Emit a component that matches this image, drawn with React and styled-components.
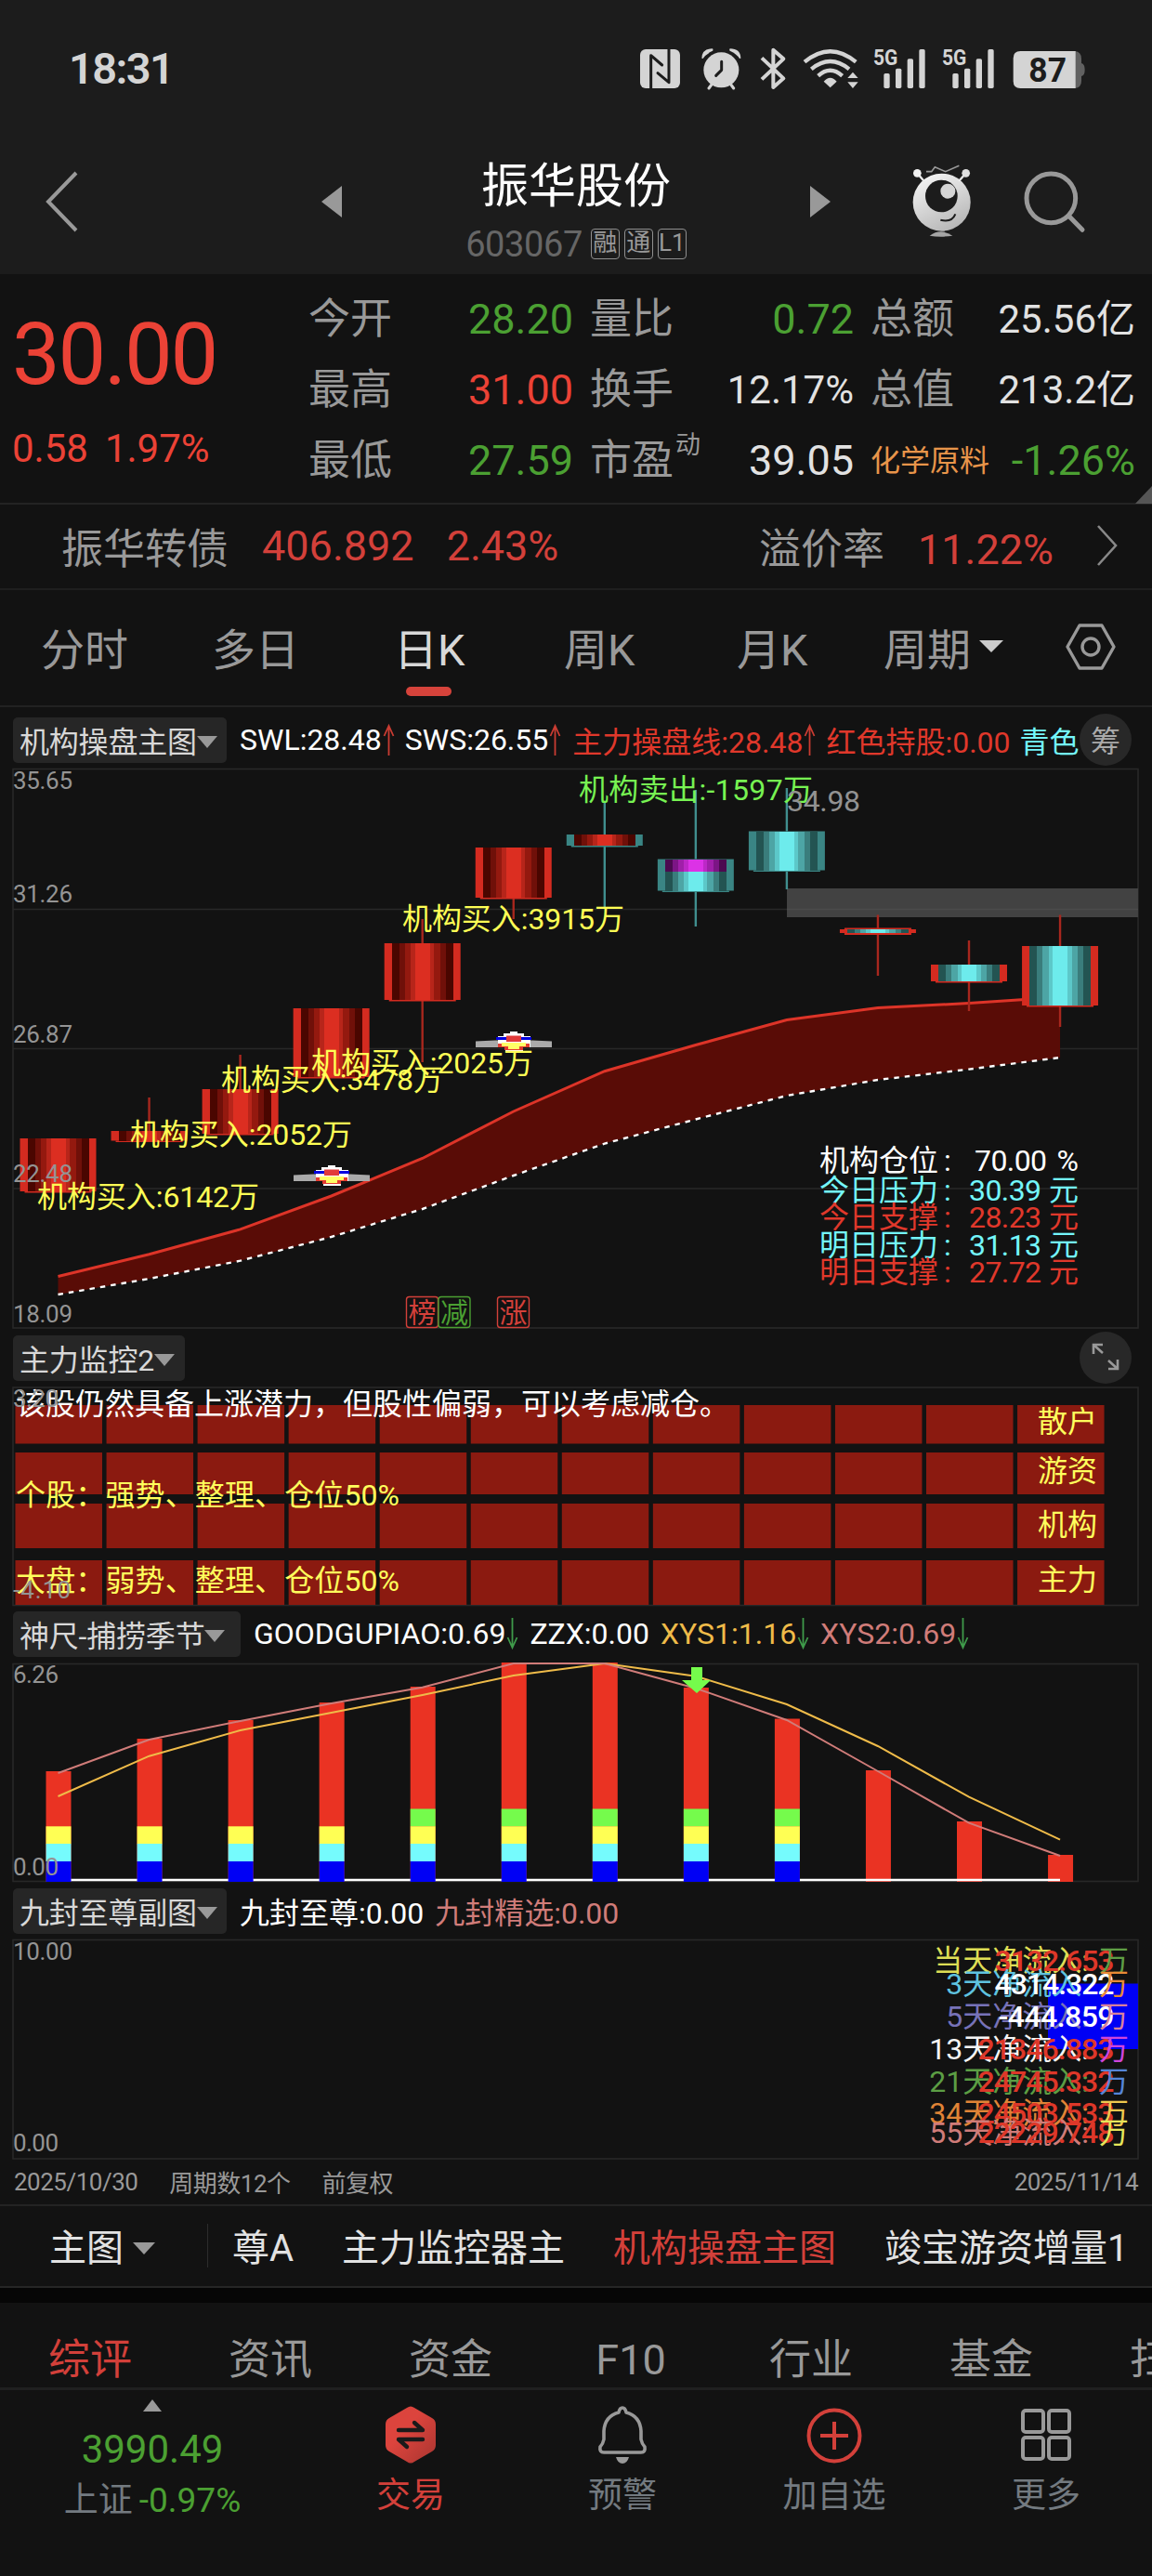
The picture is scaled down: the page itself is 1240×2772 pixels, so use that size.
import styled, { createGlobalStyle } from "styled-components";

const GlobalStyle = createGlobalStyle`
  body {
    margin: 0;
    background: #121212;
  }
  * {
    box-sizing: border-box;
  }
  svg {
    display: block;
    flex-shrink: 0;
  }
`;

const RED = "#eb4236";
const DIM_RED = "#d3403a";
const GREEN = "#4ba032";
const GRAY = "#999";
const LIGHT = "#e2e2e2";
const CYAN = "#74f6fa";
const YELLOW = "#ffff55";
const PINK = "#d07c79";
const GOLD = "#efbb49";

const Page = styled.div`
  width: 1240px;
  height: 2772px;
  overflow: hidden;
  background: #121212;
  color: ${LIGHT};
  font-family: Roboto, "Noto Sans CJK SC", sans-serif;
  font-weight: 400;
  white-space: nowrap;
`;

/* ---------- status bar ---------- */
const StatusBar = styled.div`
  height: 148px;
  padding: 40px 60px 0 74px;
  display: flex;
  justify-content: space-between;
  background: #1c1c1c;
  color: #d4d4d4;
`;
const Clock = styled.span`
  font-size: 47px;
  font-weight: 600;
  line-height: 68px;
  letter-spacing: -1.6px;
`;
const StatusIcons = styled.div`
  display: flex;
  height: 70px;
`;

/* ---------- header ---------- */
const Header = styled.header`
  height: 147px;
  display: flex;
  align-items: flex-start;
  background: #1c1c1c;
`;
const HeaderIcon = styled.div`
  margin: ${({ $top }) => $top}px 0 0 ${({ $left }) => $left}px;
`;
const HeaderCenter = styled.div`
  width: 504px;
  padding-top: 18px;
  display: flex;
  flex-direction: column;
  align-items: center;
`;
const StockName = styled.h1`
  margin: 0;
  font-size: 51px;
  font-weight: 400;
  line-height: 70px;
  color: #fff;
`;
const StockCode = styled.div`
  display: flex;
  align-items: center;
  gap: 5px;
  height: 33px;
  margin-top: 10px;
  color: #666;
  font-size: 38px;
  letter-spacing: -0.4px;
`;
const CodeBadge = styled.span`
  width: 31px;
  height: 33px;
  border: 1.5px solid #8f8f8f;
  border-radius: 4px;
  color: ${GRAY};
  font-size: 26px;
  line-height: 29px;
  letter-spacing: 0;
  display: flex;
  justify-content: center;
  &:first-of-type {
    margin-left: 4px;
  }
`;

/* ---------- quote ---------- */
const Quote = styled.section`
  position: relative;
  height: 248px;
  display: flex;
  border-bottom: 2px solid #232323;
`;
const PriceBox = styled.div`
  width: 332px;
  padding: 33px 0 0 13px;
  color: ${RED};
`;
const Price = styled.div`
  font-size: 92px;
  font-weight: 450;
  line-height: 108px;
  letter-spacing: -2.2px;
`;
const Change = styled.div`
  margin-top: 21px;
  display: flex;
  gap: 18px;
  font-size: 42px;
  line-height: 52px;
`;
const QuoteGrid = styled.div`
  display: grid;
  grid-template-columns: 285px 284px 285px;
  column-gap: 18px;
  grid-auto-rows: 76px;
  padding-top: 11px;
`;
const QuoteCell = styled.div`
  display: flex;
  align-items: center;
  justify-content: space-between;
  line-height: 76px;
`;
const QuoteLabel = styled.span`
  font-size: ${({ $small }) => ($small ? 32 : 45)}px;
  color: ${({ $small }) => ($small ? "#e8954a" : GRAY)};
  sup {
    font-size: 27px;
    line-height: 1;
    vertical-align: 23px;
    margin-left: 2px;
  }
`;
const QuoteValue = styled.span`
  font-size: ${({ $size }) => $size || 45}px;
  color: ${({ $color }) => $color || LIGHT};
`;
const Corner = styled.i`
  position: absolute;
  right: 0;
  bottom: -1px;
  border-left: 18px solid transparent;
  border-bottom: 19px solid #555;
`;

/* ---------- bond row ---------- */
const BondRow = styled.section`
  height: 92px;
  padding: 0 36px 2px 66px;
  display: flex;
  align-items: center;
  border-bottom: 2px solid #1e1e1e;
  font-size: 45px;
  color: ${GRAY};
`;
const BondValue = styled.span`
  color: ${DIM_RED};
  margin-left: ${({ $left }) => $left}px;
`;
const BondRate = styled.div`
  margin-left: auto;
  margin-right: 46px;
`;

/* ---------- period tabs ---------- */
const PeriodTabs = styled.nav`
  height: 126px;
  padding-left: 44px;
  display: grid;
  grid-template-columns: 184px 196px 183px 186px 158px 196px auto;
  border-bottom: 2px solid #222;
`;
const PeriodTab = styled.div`
  display: flex;
  align-items: center;
  gap: 9px;
  width: max-content;
  padding-bottom: 3px;
  font-size: 47px;
  position: relative;
  color: ${({ $active }) => ($active ? "#d8d8d8" : GRAY)};
  &::after {
    content: "";
    display: ${({ $active }) => ($active ? "block" : "none")};
    position: absolute;
    left: 13px;
    bottom: 10px;
    width: 49px;
    height: 10px;
    border-radius: 5px;
    background: #d6433b;
  }
`;
const Caret = styled.i`
  border: ${({ $size }) => $size || 11}px solid transparent;
  border-top: 13px solid ${({ $color }) => $color || GRAY};
  border-bottom: 0;
`;

/* ---------- chart legends ---------- */
const Legend = styled.div`
  height: ${({ $height }) => $height || 59}px;
  padding: ${({ $top }) => $top || 0}px 22px 0 14px;
  display: flex;
  align-items: center;
  font-size: 32px;
  font-weight: 400;
  position: relative;
`;
const IndicatorTag = styled.div`
  width: ${({ $width }) => $width}px;
  height: 49px;
  margin-right: 14px;
  padding: 0 0 2px 7px;
  border-radius: 5px;
  background: #262626;
  color: #d8d8d8;
  letter-spacing: -0.2px;
  display: flex;
  align-items: center;
  i {
    margin-top: 5px;
  }
`;
const LegendItem = styled.span`
  display: flex;
  align-items: center;
  padding-bottom: 1px;
  color: ${({ $color }) => $color || "#fff"};
  margin-left: ${({ $gap }) => $gap || 0}px;
  svg {
    margin-left: 1px;
  }
`;
const RoundButton = styled.div`
  position: absolute;
  right: 22px;
  bottom: 1px;
  width: 56px;
  height: 56px;
  padding-bottom: 2px;
  border-radius: 50%;
  background: #282828;
  color: #aaa;
  display: flex;
  align-items: center;
  justify-content: center;
`;
const DateRow = styled.div`
  height: 49px;
  padding: 0 15px 2px;
  display: flex;
  align-items: center;
  gap: 34px;
  font-size: 26px;
  letter-spacing: -0.5px;
  color: ${GRAY};
  border-bottom: 2px solid #232323;
  span:last-child {
    margin-left: auto;
  }
`;

/* ---------- bottom ---------- */
const IndicatorBar = styled.div`
  height: 88px;
  padding: 0 0 2px 53px;
  display: flex;
  align-items: center;
  font-size: 40px;
  border-bottom: 2px solid #262626;
`;
const MainPick = styled.div`
  width: 171px;
  height: 47px;
  margin-right: 26px;
  flex-shrink: 0;
  border-right: 1px solid #2c2c2c;
  display: flex;
  align-items: center;
  gap: 10px;
  i {
    margin-top: 6px;
  }
`;
const IndicatorName = styled.span`
  margin-right: 52px;
  flex-shrink: 0;
  color: ${({ $active }) => ($active ? DIM_RED : LIGHT)};
`;
const Divider = styled.div`
  height: 16px;
  background: #060606;
`;
const InfoTabs = styled.nav`
  height: 94px;
  padding-top: 31px;
  display: flex;
  border-bottom: 3px solid #1f1f1f;
`;
const InfoTab = styled.div`
  flex: 0 0 194px;
  text-align: center;
  font-size: 45px;
  line-height: 62px;
  color: ${({ $active }) => ($active ? DIM_RED : GRAY)};
`;
const BottomNav = styled.footer`
  display: flex;
  height: 200px;
`;
const IndexBox = styled.div`
  width: 329px;
  padding-top: 10px;
  display: flex;
  flex-direction: column;
  align-items: center;
  color: ${GREEN};
`;
const UpCaret = styled.i`
  border: 10px solid transparent;
  border-bottom: 13px solid ${GRAY};
  border-top: 0;
`;
const IndexPoint = styled.div`
  margin-top: 13px;
  font-size: 42px;
  line-height: 56px;
`;
const IndexChange = styled.div`
  margin-top: 2px;
  font-size: 37px;
  line-height: 50px;
  display: flex;
  gap: 7px;
  span:first-child {
    color: #737a80;
  }
`;
const NavItem = styled.div`
  width: 228px;
  flex-shrink: 0;
  padding-top: 16px;
  display: flex;
  flex-direction: column;
  align-items: center;
  gap: 7px;
  font-size: 37px;
  line-height: 54px;
  color: ${({ $active }) => ($active ? DIM_RED : "#737a80")};
`;

/* ---------- data ---------- */
const quotes = [
  { label: "今开", value: "28.20", color: GREEN },
  { label: "量比", value: "0.72", color: GREEN },
  { label: "总额", value: "25.56亿", size: 42 },
  { label: "最高", value: "31.00", color: RED },
  { label: "换手", value: "12.17%", size: 42 },
  { label: "总值", value: "213.2亿", size: 42 },
  { label: "最低", value: "27.59", color: GREEN },
  { label: "市盈", sup: "动", value: "39.05" },
  { label: "化学原料", small: true, value: "-1.26%", color: GREEN },
];

const centerOf = (i) => 62.5 + 98.05 * i;

const RED_TONES = ["#4a0600", "#701009", "#94190f", "#b7251a", "#dc2e21"];
const TEAL_TONES = ["#235452", "#3a7d7c", "#4da5a5", "#5cc8c9", "#6debec"];
const MAGENTA_TONES = ["#4c0a50", "#7c1585", "#a01fa9", "#bd28c7", "#dc32e6"];
const EDGE_RED = "#d42b20";
const EDGE_TEAL = "#3a8584";

// top / bottom of the body, then high / low of the wick
const candles = [
  { top: 1225, bottom: 1283 },
  { top: 1217, bottom: 1228.5, high: 1181 },
  { top: 1172, bottom: 1221, high: 1135 },
  { top: 1085, bottom: 1160 },
  { top: 1015, bottom: 1077, high: 989, low: 1143 },
  { top: 912, bottom: 967, low: 989 },
  { top: 898, bottom: 911, high: 863, low: 977, edge: EDGE_TEAL },
  { top: 924.5, bottom: 959.5, high: 850, low: 997, edge: EDGE_TEAL, tones: TEAL_TONES, cap: 938 },
  { top: 894.5, bottom: 937.5, high: 848, low: 957, edge: EDGE_TEAL, tones: TEAL_TONES },
  { top: 999, bottom: 1005, high: 984.5, low: 1050, tones: TEAL_TONES, thin: true },
  { top: 1038, bottom: 1057, high: 1012, low: 1088, tones: TEAL_TONES },
  { top: 1018, bottom: 1083, high: 984.5, low: 1105, tones: TEAL_TONES },
];
const upperLine = [1373.5, 1349.8, 1322.9, 1287, 1246.5, 1196, 1152.7, 1124.5, 1097.5, 1084.5, 1079.6, 1073];
const lowerLine = [1393, 1376, 1356.7, 1331, 1301, 1265, 1230.6, 1204.5, 1179, 1162, 1150.6, 1138];

const flowLabels = [
  { x: 40, y: 1299, text: "机构买入:6142万" },
  { x: 140, y: 1231.5, text: "机构买入:2052万" },
  { x: 238, y: 1172.5, text: "机构买入:3478万" },
  { x: 335, y: 1155, text: "机构买入:2025万" },
  { x: 433, y: 1000, text: "机构买入:3915万" },
];
const hints = [
  { y: 1260, label: "机构仓位", value: "70.00", unit: "%", color: "#fff" },
  { y: 1292, label: "今日压力", value: "30.39", unit: "元", color: CYAN },
  { y: 1320.5, label: "今日支撑", value: "28.23", unit: "元", color: "#e0382b" },
  { y: 1351, label: "明日压力", value: "31.13", unit: "元", color: CYAN },
  { y: 1380, label: "明日支撑", value: "27.72", unit: "元", color: "#e0382b" },
];
const marks = [
  { x: 437.5, text: "榜", color: DIM_RED },
  { x: 472, text: "减", color: GREEN },
  { x: 535.5, text: "涨", color: DIM_RED },
];

const blockRows = [
  { y: 1512, h: 41.5, label: "散户", base: 1540.5 },
  { y: 1563, h: 45, label: "游资", base: 1593.5 },
  { y: 1618, h: 48, label: "机构", base: 1652 },
  { y: 1679, h: 48, label: "主力", base: 1711 },
];

const bars = [1906, 1871, 1851, 1832, 1815, 1789, 1789, 1816, 1849.5, 1905, 1960, 1996];
const xys2 = [1908, 1872, 1852, 1833, 1815.7, 1790, 1790, 1816.7, 1851, 1906, 1961.7, 1997];
const xys1 = [1933, 1889.7, 1862, 1843, 1824, 1803, 1790, 1803.7, 1834, 1879, 1933.7, 1979.7];

const netFlows = [
  { y: 2121, label: "当天净流入:", color: "#dede55", value: "3132.653", unit: "#5f9e45" },
  { y: 2146, label: "3天净流入:", color: "#5fc3e0", value: "4314.322", white: true, unit: "#e88a35" },
  { y: 2180.5, label: "5天净流入:", color: "#7772b8", value: "-444.859", white: true, unit: "#d9809a" },
  { y: 2215.5, label: "13天净流入:", color: "#f4f4f4", value: "21346.883", unit: "#cf45dd" },
  { y: 2250.7, label: "21天净流入:", color: "#5c9e44", value: "24745.332", unit: "#5585d8" },
  { y: 2285, label: "34天净流入:", color: "#e08436", value: "24503.533", unit: "#eec84f" },
  { y: 2306, label: "55天净流入:", color: PINK, value: "22229.748", unit: "#e6e65a" },
];

const toPoints = (ys) => ys.map((y, i) => `${centerOf(i)},${y}`).join(" ");

/* ---------- chart parts ---------- */
const ChartSvg = styled.svg`
  font-family: Roboto, "Noto Sans CJK SC", sans-serif;
  font-size: 32px;
`;
const AxisText = styled.text`
  font-size: 26px;
  fill: #949494;
`;

function Chart({ top, height, children }) {
  return (
    <ChartSvg width="1240" height={height} viewBox={`0 ${top} 1240 ${height}`}>
      {children}
    </ChartSvg>
  );
}

function Frame({ top, bottom }) {
  return (
    <rect x="14" y={top} width="1211" height={bottom - top} fill="none" stroke="#282828" strokeWidth="1.6" />
  );
}

function Stripes({ x, top, height, tones }) {
  const edges = [8, 16, 22, 28.5, 33];
  return (
    <g shapeRendering="crispEdges">
      {tones.map((tone, i) => (
        <rect key={tone} x={x + edges[i]} y={top} width={82 - edges[i] * 2} height={height} fill={tone} />
      ))}
    </g>
  );
}

function Candle({ index, top, bottom, high, low, edge = EDGE_RED, tones = RED_TONES, cap, thin }) {
  const cx = centerOf(index);
  const x = cx - 41;
  const wick = edge === EDGE_RED ? "#a8271e" : "#408f8f";
  return (
    <g>
      {low && <path d={`M${cx} ${bottom}V${low}`} stroke={wick} strokeWidth="2.4" />}
      {thin ? (
        <>
          <rect x={x} y={top + 1} width="82" height="4" fill={edge} />
          <rect x={x + 5} y={top - 0.5} width="72" height="7.5" fill={edge} />
          <Stripes x={x} top={top + 1} height={4} tones={tones} />
        </>
      ) : (
        <>
          <rect x={x} y={top} width="82" height={bottom - top - 1} fill={edge} />
          <rect x={x + 5} y={bottom - 1} width="72" height="1.5" fill={edge} />
          <Stripes x={x} top={top} height={bottom - top - 1} tones={tones} />
        </>
      )}
      {cap && <Stripes x={x} top={top} height={cap - top} tones={MAGENTA_TONES} />}
      {high && <path d={`M${cx} ${high}V${top}`} stroke={wick} strokeWidth="2.4" />}
    </g>
  );
}

function Plane({ cx, top }) {
  return (
    <g transform={`translate(${cx} ${top})`}>
      <path d="M-41 10.5L-20 9.5H20L41 10.5V17H-41Z" fill="#aaa" />
      <path d="M-17 5H-11V2H-4V0H4V2H11V5H18V17H10V22H-9V17H-17Z" fill="#fff" />
      <path d="M-19 6H19V9H-19Z" fill="#0000e0" />
      <path d="M-8 4.5H8V11H-8Z" fill="#e23a3a" />
      <path d="M-17 13H17V17H10V20H-10V17H-17Z" fill="#e33a30" />
      <path d="M-13 12H13V16H6V19H-6V16H-13Z" fill="#ffff66" />
    </g>
  );
}

function MainChart() {
  return (
    <Chart top={825} height={606}>
      <Frame top={827.5} bottom={1429} />
      {[978.5, 1128.5, 1279].map((y) => (
        <path key={y} d={`M14 ${y}H1225`} stroke="#282828" strokeWidth="1.4" />
      ))}
      <polygon
        points={`${toPoints(upperLine)} ${toPoints(lowerLine).split(" ").reverse().join(" ")}`}
        fill="#590c06"
      />
      <polyline points={toPoints(upperLine)} fill="none" stroke="#dd3428" strokeWidth="3" />
      <polyline points={toPoints(lowerLine)} fill="none" stroke="#fff" strokeWidth="2.4" strokeDasharray="5.5 6" />
      <rect x="847" y="956" width="378" height="31" fill="#424242" />
      <path d="M847 978.5H1225" stroke="#4b4b4b" strokeWidth="1.4" />
      {candles.map((candle, i) => (
        <Candle key={i} index={i} {...candle} />
      ))}
      <Plane cx={357} top={1254} />
      <Plane cx={553} top={1110} />
      {flowLabels.map(({ x, y, text }) => (
        <text key={text} x={x} y={y} fill={YELLOW} textLength="239">
          {text}
        </text>
      ))}
      <text x="623" y="860.5" fill="#77f352" textLength="252">
        机构卖出:-1597万
      </text>
      <text x="847" y="872.5" fill="#929292" textLength="79">
        34.98
      </text>
      {hints.map(({ y, label, value, unit, color }) => (
        <g key={label} fill={color}>
          <text x="882" y={y}>
            {label}
          </text>
          <text x="1016" y={y}>
            :
          </text>
          <text x={unit === "%" ? 1127 : 1121} y={y} textAnchor="end" textLength="78">
            {value}
          </text>
          <text x="1161" y={y} textAnchor="end">
            {unit}
          </text>
        </g>
      ))}
      {marks.map(({ x, text, color }) => (
        <g key={text}>
          <rect x={x} y="1395.5" width="34" height="33" rx="3" fill="#121212" stroke={color} strokeWidth="1.4" />
          <text x={x + 17} y="1423" textAnchor="middle" fontSize="30" fill={color}>
            {text}
          </text>
        </g>
      ))}
      {[
        ["35.65", 849],
        ["31.26", 970.5],
        ["26.87", 1122],
        ["22.48", 1272],
        ["18.09", 1423],
      ].map(([text, y]) => (
        <AxisText key={text} x="14" y={y} textLength="64">
          {text}
        </AxisText>
      ))}
    </Chart>
  );
}

function MonitorChart() {
  return (
    <Chart top={1490} height={239}>
      <Frame top={1493} bottom={1727.5} />
      {blockRows.map(({ y, h }) =>
        candles.map((_, i) => (
          <rect key={`${y}-${i}`} x={centerOf(i) - 46} y={y} width="93.5" height={h} fill="#8b1a10" />
        ))
      )}
      <text x="17" y="1521.5" fill="#fff">
        该股仍然具备上涨潜力，但股性偏弱，可以考虑减仓。
      </text>
      <text x="17" y="1620" fill="#ffff5c" textLength="413">
        个股：强势、整理、仓位50%
      </text>
      <text x="17" y="1711.5" fill="#ffff5c" textLength="413">
        大盘：弱势、整理、仓位50%
      </text>
      {blockRows.map(({ label, base }) => (
        <text key={label} x="1117" y={base} fill="#ffff5c">
          {label}
        </text>
      ))}
      <AxisText x="14" y="1514" textLength="49">
        3.20
      </AxisText>
      <AxisText x="14" y="1720" textLength="62">
        -4.10
      </AxisText>
    </Chart>
  );
}

function SeasonChart() {
  return (
    <Chart top={1788} height={238}>
      <Frame top={1790.5} bottom={2024.5} />
      {bars.map((y, i) => (
        <rect key={i} x={centerOf(i) - 13} y={y} width="27" height={2025 - y} fill="#ea3323" />
      ))}
      <path d="M63 2023H1141" stroke="#fff" strokeWidth="2.4" />
      {bars.slice(0, 9).map((_, i) => (
        <g key={i} transform={`translate(${centerOf(i) - 13} 0)`}>
          {i > 3 && <rect y="1946.5" width="27" height="19" fill="#75fb4c" />}
          <rect y="1965.3" width="27" height="19" fill="#ffff54" />
          <rect y="1984" width="27" height="19" fill="#75fbfd" />
          <rect y="2003" width="27" height="22" fill="#0000f5" />
        </g>
      ))}
      <polyline points={toPoints(xys1)} fill="none" stroke={GOLD} strokeWidth="2" />
      <polyline points={toPoints(xys2)} fill="none" stroke={PINK} strokeWidth="2" />
      <path d="M744 1794H756V1808H765L750 1822L734 1808H744Z" fill="#75fb4c" />
      <AxisText x="14" y="1811" textLength="49">
        6.26
      </AxisText>
      <AxisText x="14" y="2018" textLength="49">
        0.00
      </AxisText>
    </Chart>
  );
}

function FlowChart() {
  return (
    <Chart top={2085} height={240}>
      <Frame top={2087.5} bottom={2323} />
      <rect x="1128" y="2134.5" width="97" height="70.5" fill="#0000f5" />
      {netFlows.map(({ y, label, color, value, white, unit }) => (
        <g key={label}>
          <text x="1172" y={y} textAnchor="end" fill={color}>
            {label}
          </text>
          <text
            x="1199.5"
            y={y}
            textAnchor="end"
            textLength={value.length > 8 ? 147 : white && value[0] === "-" ? 125 : 129}
            fill={white ? "#fff" : "#de3729"}
            fontWeight="500"
          >
            {value}
          </text>
          <text x="1183" y={y} fill={unit}>
            万
          </text>
        </g>
      ))}
      <AxisText x="14" y="2109" textLength="64">
        10.00
      </AxisText>
      <AxisText x="14" y="2314.5" textLength="49">
        0.00
      </AxisText>
    </Chart>
  );
}

/* ---------- icons ---------- */
function Signal() {
  return (
    <svg width="74" height="70" viewBox="760 0 222 210" fill="#d4d4d4">
      <text
        x="781"
        y="91"
        fontSize="73"
        fontWeight="700"
        fontFamily="Roboto, sans-serif"
        textLength="79"
        lengthAdjust="spacingAndGlyphs"
      >
        5G
      </text>
      <rect x="815" y="117" width="19" height="48" rx="5" />
      <rect x="853" y="101" width="19" height="64" rx="5" />
      <rect x="891" y="70" width="19" height="95" rx="5" />
      <rect x="929" y="39" width="19" height="126" rx="5" />
    </svg>
  );
}

function StatusGroup() {
  return (
    <StatusIcons>
      <svg width="63.3" height="70" viewBox="0 0 190 210">
        <rect x="27" y="39" width="129" height="126" rx="18" fill="#d4d4d4" />
        <path
          d="M62 165V59L98 90M120 39V146L84 116"
          fill="none"
          stroke="#1c1c1c"
          strokeWidth="9"
          strokeLinecap="round"
          strokeLinejoin="round"
        />
      </svg>
      <svg width="66.7" height="70" viewBox="190 0 200 210">
        <g fill="#d4d4d4" stroke="#d4d4d4" strokeLinecap="round">
          <circle cx="290" cy="106" r="57" stroke="none" />
          <path d="M261 150L250 165M319 150L330 165" strokeWidth="9" />
          <path d="M227 68Q228 37 262 37Q266 43 259 46Q240 55 231 69ZM353 68Q352 37 318 37Q314 43 321 46Q340 55 349 69Z" stroke="none" />
        </g>
        <path d="M291 79V106L273 124" fill="none" stroke="#1c1c1c" strokeWidth="9" strokeLinecap="round" strokeLinejoin="round" />
      </svg>
      <svg width="45" height="70" viewBox="390 0 135 210">
        <path
          d="M420 67L490 133L457 162V41L490 70L420 136"
          fill="none"
          stroke="#d4d4d4"
          strokeWidth="12"
          strokeLinejoin="round"
        />
      </svg>
      <svg width="78.3" height="70" viewBox="525 0 235 210">
        <g fill="none" stroke="#d4d4d4" strokeWidth="13">
          <path d="M558 80Q641 11 724 80" />
          <path d="M580 103Q641 53 702 103" />
          <path d="M602 125Q641 90 680 125" />
        </g>
        <path d="M641 163L620 143Q641 120 662 143ZM714 113L731 132H697ZM714 165L731 145H697Z" fill="#d4d4d4" />
      </svg>
      <Signal />
      <Signal />
      <svg width="98.7" height="70" viewBox="1204 0 296 210">
        <path d="M1420 45H1432Q1453 47 1453 70V84Q1464 87 1464 105Q1464 124 1453 126V142Q1453 163 1432 165H1420Z" fill="#616161" />
        <path d="M1434 45H1256Q1233 45 1233 68V142Q1233 165 1256 165H1434Z" fill="#d4d4d4" />
        <text
          x="1283"
          y="143"
          fontSize="108"
          fontWeight="700"
          fontFamily="Roboto, sans-serif"
          fill="#1c1c1c"
          textLength="122"
          lengthAdjust="spacingAndGlyphs"
        >
          87
        </text>
      </svg>
    </StatusIcons>
  );
}

function RobotIcon() {
  return (
    <svg width="66.7" height="81.7" viewBox="60 30 200 245">
      <defs>
        <linearGradient id="robot" x1="0.2" y1="0" x2="0.7" y2="1">
          <stop offset="0" stopColor="#f5f5f5" />
          <stop offset="1" stopColor="#b5b5b5" />
        </linearGradient>
      </defs>
      <circle cx="161" cy="158" r="93" fill="url(#robot)" />
      <path d="M83 65L104 90M238 65L216 90" stroke="#e8e8e8" strokeWidth="7" />
      <circle cx="82" cy="64" r="13" fill="#f2f2f2" />
      <circle cx="239" cy="64" r="13" fill="#e0e0e0" />
      <path d="M111 59H128L139 44L173 59L217 40" fill="none" stroke="#999" strokeWidth="5" />
      <circle cx="160" cy="138" r="52" fill="#1c1c1c" />
      <circle cx="181" cy="122" r="24" fill="#d5d5d5" />
      <path d="M157 215Q194 224 205 196" fill="none" stroke="#1c1c1c" strokeWidth="6" />
      <path d="M122 266Q158 240 196 266Q158 272 122 266Z" fill="#a5a5a5" />
    </svg>
  );
}

function Arrow({ down, color }) {
  return (
    <svg width="13" height="34" viewBox="0 0 13 34">
      <path
        d={down ? "M6.5 0V32M1.5 21L6.5 32L11.5 21" : "M6.5 34V2M1.5 13L6.5 2L11.5 13"}
        fill="none"
        stroke={color}
        strokeWidth="1.8"
      />
    </svg>
  );
}

function App() {
  return (
    <>
      <GlobalStyle />
      <Page>
        <StatusBar>
          <Clock>18:31</Clock>
          <StatusGroup />
        </StatusBar>

        <Header>
          <HeaderIcon $left={48} $top={36}>
            <svg width="36" height="66" viewBox="0 0 36 66">
              <path d="M34 2L4 33L34 64" fill="none" stroke="#999" strokeWidth="4" />
            </svg>
          </HeaderIcon>
          <HeaderIcon $left={262} $top={52}>
            <svg width="22" height="34" viewBox="0 0 22 34">
              <path d="M22 0V34L0 17Z" fill="#999" />
            </svg>
          </HeaderIcon>
          <HeaderCenter>
            <StockName>振华股份</StockName>
            <StockCode>
              603067
              <CodeBadge>融</CodeBadge>
              <CodeBadge>通</CodeBadge>
              <CodeBadge>L1</CodeBadge>
            </StockCode>
          </HeaderCenter>
          <HeaderIcon $left={0} $top={52}>
            <svg width="22" height="34" viewBox="0 0 22 34">
              <path d="M0 0V34L22 17Z" fill="#999" />
            </svg>
          </HeaderIcon>
          <HeaderIcon $left={86} $top={27}>
            <RobotIcon />
          </HeaderIcon>
          <HeaderIcon $left={53} $top={34}>
            <svg width="70" height="70" viewBox="420 50 210 210">
              <g fill="none" stroke="#999" strokeWidth="15">
                <circle cx="514" cy="144" r="79" />
                <path d="M571 201L615 246" strokeLinecap="round" />
              </g>
            </svg>
          </HeaderIcon>
        </Header>

        <Quote>
          <PriceBox>
            <Price>30.00</Price>
            <Change>
              <span>0.58</span>
              <span>1.97%</span>
            </Change>
          </PriceBox>
          <QuoteGrid>
            {quotes.map(({ label, sup, small, value, color, size }) => (
              <QuoteCell key={label}>
                <QuoteLabel $small={small}>
                  {label}
                  {sup && <sup>{sup}</sup>}
                </QuoteLabel>
                <QuoteValue $color={color} $size={size}>
                  {value}
                </QuoteValue>
              </QuoteCell>
            ))}
          </QuoteGrid>
          <Corner />
        </Quote>

        <BondRow>
          振华转债
          <BondValue $left={36}>406.892</BondValue>
          <BondValue $left={35}>2.43%</BondValue>
          <BondRate>
            溢价率
            <BondValue $left={36}>11.22%</BondValue>
          </BondRate>
          <svg width="24" height="44" viewBox="0 0 24 44">
            <path d="M2 1L21 22L2 43" fill="none" stroke="#888" strokeWidth="2.6" />
          </svg>
        </BondRow>

        <PeriodTabs>
          <PeriodTab>分时</PeriodTab>
          <PeriodTab>多日</PeriodTab>
          <PeriodTab $active>日K</PeriodTab>
          <PeriodTab>周K</PeriodTab>
          <PeriodTab>月K</PeriodTab>
          <PeriodTab>
            周期
            <Caret $size={13} $color="#ccc" />
          </PeriodTab>
          <PeriodTab>
            <svg width="54" height="50" viewBox="0 0 54 50">
              <g fill="none" stroke="#999" strokeWidth="3.4" strokeLinejoin="round">
                <path d="M15 2H39L52 25L39 48H15L2 25Z" />
                <circle cx="27" cy="25" r="9" />
              </g>
            </svg>
          </PeriodTab>
        </PeriodTabs>

        <Legend $height={64} $top={7}>
          <IndicatorTag $width={230}>
            机构操盘主图
            <Caret />
          </IndicatorTag>
          <LegendItem>
            SWL:28.48
            <Arrow color="#c93c32" />
          </LegendItem>
          <LegendItem $gap={11}>
            SWS:26.55
            <Arrow color="#c93c32" />
          </LegendItem>
          <LegendItem $gap={12} $color="#e0382b">
            主力操盘线:28.48
            <Arrow color="#c93c32" />
          </LegendItem>
          <LegendItem $gap={11} $color="#e0382b">
            红色持股:0.00
          </LegendItem>
          <LegendItem $gap={10} $color={CYAN}>
            青色
          </LegendItem>
          <RoundButton>筹</RoundButton>
        </Legend>
        <MainChart />

        <Legend $top={2}>
          <IndicatorTag $width={185}>
            主力监控2
            <Caret />
          </IndicatorTag>
          <RoundButton>
            <svg width="30" height="30" viewBox="0 0 30 30">
              <path
                d="M2 12V2H12M2 2L12 11M28 18V28H18M28 28L18 19"
                fill="none"
                stroke="#999"
                strokeWidth="2.6"
              />
            </svg>
          </RoundButton>
        </Legend>
        <MonitorChart />

        <Legend>
          <IndicatorTag $width={245}>
            神尺-捕捞季节
            <Caret />
          </IndicatorTag>
          <LegendItem>
            GOODGUPIAO:0.69
            <Arrow down color="#3f9a4a" />
          </LegendItem>
          <LegendItem $gap={12}>ZZX:0.00</LegendItem>
          <LegendItem $gap={12} $color={GOLD}>
            XYS1:1.16
            <Arrow down color="#3f9a4a" />
          </LegendItem>
          <LegendItem $gap={12} $color={PINK}>
            XYS2:0.69
            <Arrow down color="#3f9a4a" />
          </LegendItem>
        </Legend>
        <SeasonChart />

        <Legend $top={2}>
          <IndicatorTag $width={230}>
            九封至尊副图
            <Caret />
          </IndicatorTag>
          <LegendItem>九封至尊:0.00</LegendItem>
          <LegendItem $gap={12} $color={PINK}>
            九封精选:0.00
          </LegendItem>
        </Legend>
        <FlowChart />

        <DateRow>
          <span>2025/10/30</span>
          <span>周期数12个</span>
          <span>前复权</span>
          <span>2025/11/14</span>
        </DateRow>

        <IndicatorBar>
          <MainPick>
            主图
            <Caret $size={12} />
          </MainPick>
          <IndicatorName>尊A</IndicatorName>
          <IndicatorName>主力监控器主</IndicatorName>
          <IndicatorName $active>机构操盘主图</IndicatorName>
          <IndicatorName>竣宝游资增量1</IndicatorName>
        </IndicatorBar>
        <Divider />

        <InfoTabs>
          {["综评", "资讯", "资金", "F10", "行业", "基金", "扫雷"].map((name, i) => (
            <InfoTab key={name} $active={i === 0}>
              {name}
            </InfoTab>
          ))}
        </InfoTabs>

        <BottomNav>
          <IndexBox>
            <UpCaret />
            <IndexPoint>3990.49</IndexPoint>
            <IndexChange>
              <span>上证</span>
              <span>-0.97%</span>
            </IndexChange>
          </IndexBox>
          <NavItem $active>
            <svg width="56" height="64" viewBox="0 0 56 64">
              <defs>
                <linearGradient id="trade" x1="0" y1="0" x2="1" y2="1">
                  <stop offset="0.4" stopColor="#dc443d" />
                  <stop offset="1" stopColor="#a83530" />
                </linearGradient>
              </defs>
              <path
                d="M24 3Q28 0 32 3L51 14Q55 16 55 21V43Q55 48 51 50L32 61Q28 64 24 61L5 50Q1 48 1 43V21Q1 16 5 14Z"
                fill="url(#trade)"
              />
              <path
                d="M15 27H41L32 19M41 37H15L24 45"
                fill="none"
                stroke="#1a1a1a"
                strokeWidth="4.4"
                strokeLinecap="round"
                strokeLinejoin="round"
              />
            </svg>
            交易
          </NavItem>
          <NavItem>
            <svg width="56" height="64" viewBox="0 0 56 64">
              <path
                d="M28 3Q31 3 32 8Q47 12 48 28V37Q49 42 52 45Q53 51 48 51H8Q3 51 4 45Q7 42 8 37V28Q9 12 24 8Q25 3 28 3Z"
                fill="none"
                stroke="#999"
                strokeWidth="3.6"
                strokeLinejoin="round"
              />
              <path d="M21 56H35Q33 63 28 63Q23 63 21 56Z" fill="#999" />
            </svg>
            预警
          </NavItem>
          <NavItem>
            <svg width="60" height="64" viewBox="0 0 60 64">
              <g fill="none" stroke={DIM_RED} strokeWidth="4">
                <circle cx="30" cy="33" r="27.5" />
                <path d="M15 33H45M30 18V48" />
              </g>
            </svg>
            加自选
          </NavItem>
          <NavItem>
            <svg width="56" height="64" viewBox="0 0 56 64">
              <g fill="none" stroke="#999" strokeWidth="4">
                <rect x="3" y="6" width="22" height="23" rx="3" />
                <rect x="31" y="6" width="22" height="23" rx="3" />
                <rect x="3" y="35" width="22" height="23" rx="3" />
                <rect x="31" y="35" width="22" height="23" rx="3" />
              </g>
            </svg>
            更多
          </NavItem>
        </BottomNav>
      </Page>
    </>
  );
}

export default App;
